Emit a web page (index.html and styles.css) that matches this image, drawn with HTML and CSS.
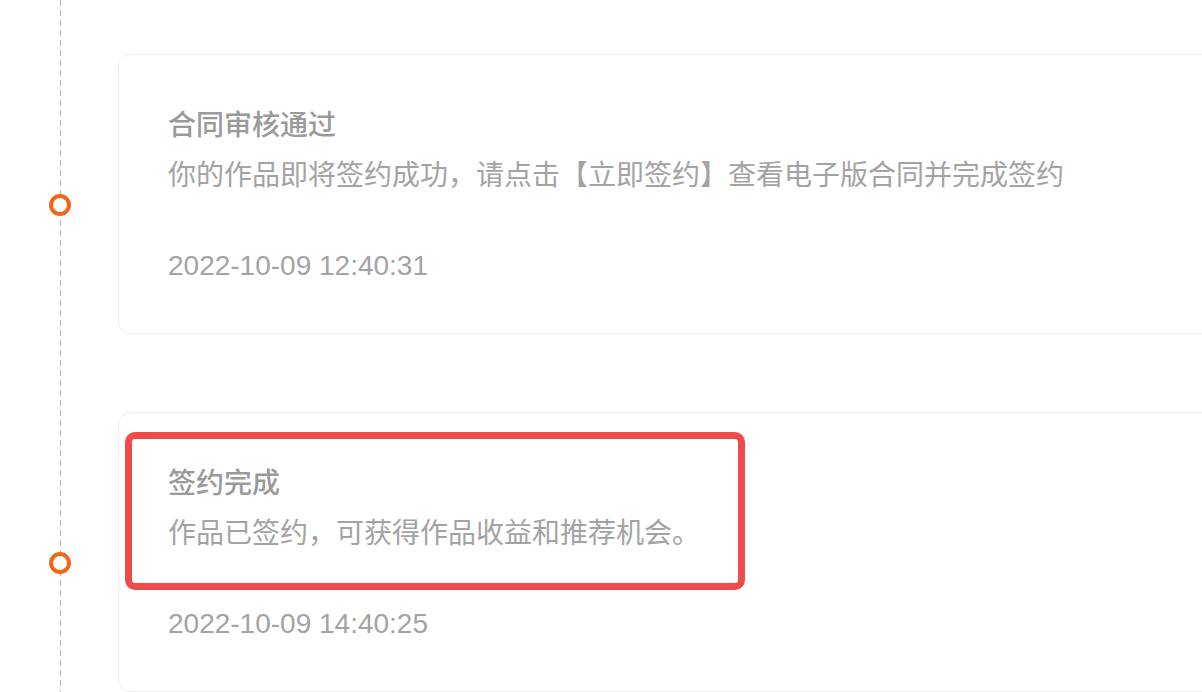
FILE: index.html
```html
<!DOCTYPE html>
<html lang="zh-CN">
<head>
  <meta charset="UTF-8" />
  <meta name="viewport" content="width=device-width, initial-scale=1.0" />
  <title>签约进度</title>
  <link rel="stylesheet" href="styles.css">
</head>
<body>

  <div class="timeline">
    <div class="item">
      <div class="axis"><span class="dot"></span></div>
      <div class="card">
        <div class="title">合同审核通过</div>
        <div class="desc">你的作品即将签约成功，请点击【立即签约】查看电子版合同并完成签约</div>
        <div class="date">2022-10-09 12:40:31</div>
      </div>
    </div>

    <div class="item">
      <div class="axis"><span class="dot"></span></div>
      <div class="card">
        <div class="mark"></div>
        <div class="title">签约完成</div>
        <div class="desc">作品已签约，可获得作品收益和推荐机会。</div>
        <div class="date">2022-10-09 14:40:25</div>
      </div>
    </div>
  </div>

</body>
</html>
```

FILE: styles.css
```css
body {
  margin: 0;
  background: #fff;
  overflow: hidden;
  height: 692px;
  font-family: "Liberation Sans", "Noto Sans CJK SC", sans-serif;
  color: #999;
}

.timeline {
  position: relative;
  padding-top: 54px;
  height: 692px;
  overflow: hidden;
  box-sizing: border-box;
}

/* dashed axis */
.timeline::before {
  content: "";
  position: absolute;
  left: 60px;
  top: 0;
  bottom: 0;
  width: 1px;
  background: repeating-linear-gradient(to bottom, #b8b8b8 0 6px, transparent 6px 10px);
}

.item {
  display: flex;
  margin-bottom: 78px;
}

.axis {
  width: 118px;
  flex: none;
}

.dot {
  position: relative;
  display: block;
  width: 22px;
  height: 22px;
  margin: 140px 0 0 49px;
  box-sizing: border-box;
  border: 4px solid #f2661a;
  border-radius: 50%;
  background: #fff;
}

.card {
  position: relative;
  flex: none;
  width: 1200px;
  border: 1px solid #efefef;
  border-radius: 12px;
  padding: 46px 0 42px 49px;
  box-sizing: border-box;
  font-size: 28px;
  line-height: 50px;
}

.title {
  font-weight: 500;
  color: #9a9a9a;
}

.desc {
  color: #a3a3a3;
}

.date {
  margin-top: 40px;
  color: #a3a3a3;
}

/* red highlight */
.mark {
  position: absolute;
  top: 19px;
  left: 6px;
  width: 620px;
  height: 158px;
  box-sizing: border-box;
  border: 7px solid #f04a4a;
  border-radius: 10px;
}
```
